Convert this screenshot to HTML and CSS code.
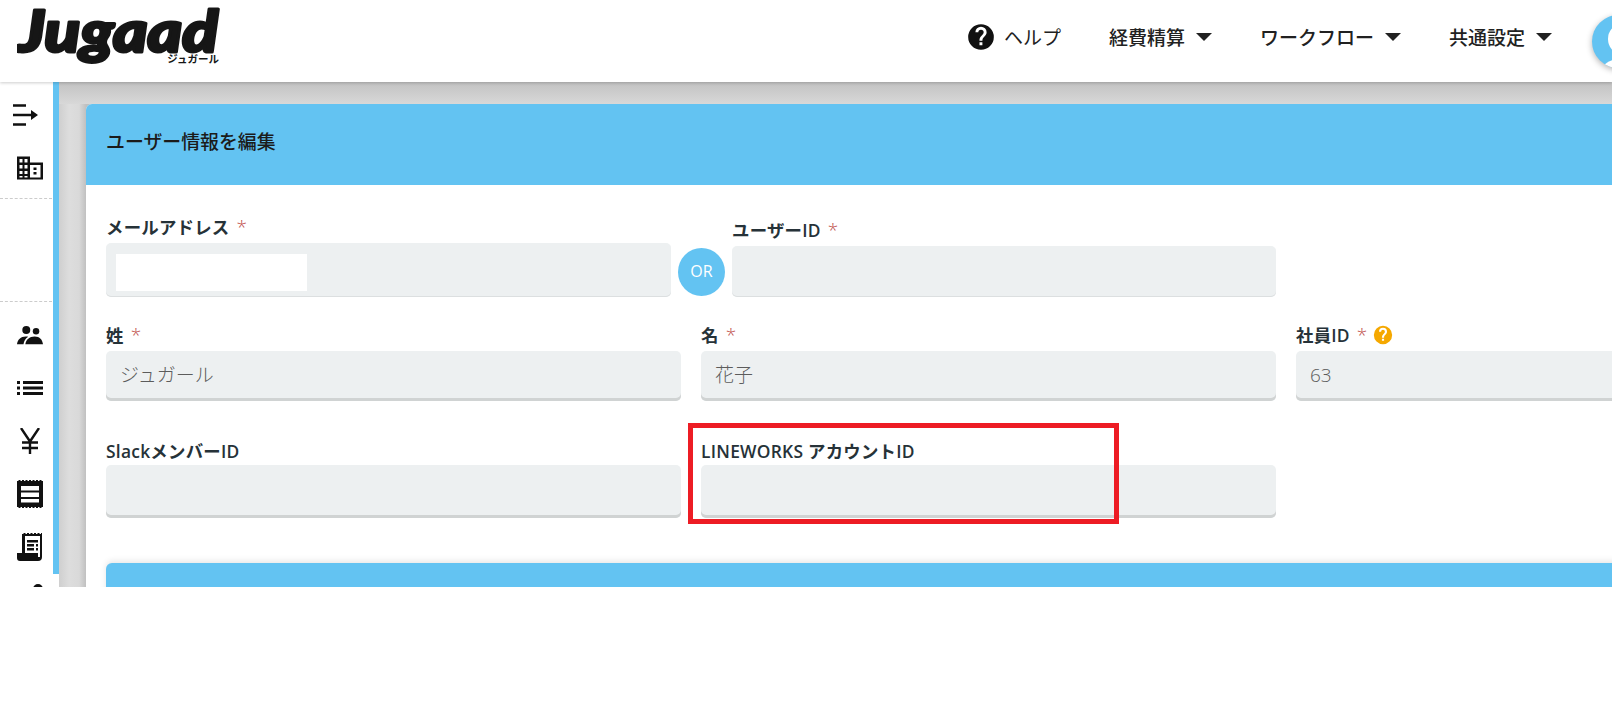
FILE: index.html
```html
<!DOCTYPE html>
<html lang="ja">
<head>
<meta charset="utf-8">
<title>ユーザー情報を編集</title>
<link rel="stylesheet" href="styles.css">
</head>
<body>
<div class="app">
  <header class="topbar">
    <svg class="logo" viewBox="0 0 206 82"><text class="logo-word" x="1" y="52" textLength="200" lengthAdjust="spacingAndGlyphs">Jugaad</text><text class="logo-sub" x="202" y="63" text-anchor="end">ジュガール</text></svg>
    <nav class="nav">
      <a class="nav-item help">
        <svg class="help-icon" viewBox="0 0 24 24"><path fill="#111" d="M12 1a11 11 0 1 0 0 22 11 11 0 0 0 0-22zm1.200 18h-2.500v-2.500h2.500V19zm2.500-8.200l-1.100 1.200c-.9.9-1.400 1.600-1.400 3.200h-2.500v-.6c0-1.300.5-2.400 1.400-3.300l1.500-1.600c.5-.4.700-1 .7-1.700a2.300 2.300 0 0 0-4.600 0H7.200a4.800 4.800 0 0 1 9.600 0c0 1.100-.4 2-1.100 2.800z"/></svg>
        ヘルプ
      </a>
      <a class="nav-item strong">経費精算<i class="caret"></i></a>
      <a class="nav-item strong">ワークフロー<i class="caret"></i></a>
      <a class="nav-item strong">共通設定<i class="caret"></i></a>
    </nav>
    <div class="avatar"></div>
  </header>
  <div class="body">
    <aside class="sidebar">
      <div class="side-group upper">
        <svg class="ico ico-arrow" viewBox="0 0 26 24"><path fill="#111" d="M0 1.300h13v2.400H0zM0 10.800h18V7l7 5-7 5v-3.800H0zM0 20.300h13v2.400H0z"/></svg>
        <svg class="ico ico-right" viewBox="0 0 26 24"><path fill="#111" fill-rule="evenodd" d="M0 .5h13v6h13v17H0zM2.500 3v3.500h3V3zm5 0v3.500h3V3zM2.500 9v3.500h3V9zm5 0v3.500h3V9zM2.500 15v3h3v-3zm5 0v3h3v-3zM2.500 20v1.500h3V20zm5 0v1.500h3V20zM13 9v12.500h10.500V9zm3.500 2.500h3V14h-3zm0 4.500h3v2.500h-3z"/></svg>
      </div>
      <div class="side-spacer"></div>
      <div class="side-group lower">
        <svg class="ico" viewBox="0 0 28 22"><g fill="#111"><circle cx="10" cy="5.500" r="4.300"/><circle cx="20.500" cy="7" r="3.500"/><path d="M0 21c.5-5 4-8.500 9.500-8.500 1 0 1.800.1 2.500.3C9 14.500 7.500 17.500 7 21zM9 21c.5-5 4.500-8.500 10-8.500s8.500 3.500 9 8.500z"/></g></svg>
        <svg class="ico" viewBox="0 0 26 15"><g fill="#111"><path d="M0 .5h3v3H0zM0 6h3v3H0zM0 11.500h3v3H0zM6 .5h20v3H6zM6 6h20v3H6zM6 11.500h20v3H6z"/></g></svg>
        <svg class="ico" viewBox="0 0 22 26"><path fill="none" stroke="#111" stroke-width="2.400" d="M2 0l9 13.500L20 0M11 13.500V26M3 14.500h16M3 20h16"/></svg>
        <svg class="ico tall-ico" viewBox="0 0 26 28"><path fill="#111" fill-rule="evenodd" d="M0 0h26v28H0zM4 6v4.500h18V6zm0 6.500V17h18v-4.500zM4 19v3.500h18V19z"/><path fill="none" stroke="#fff" stroke-width="1.200" stroke-dasharray="1.500 2" d="M0 .5h26M0 27.500h26"/></svg>
        <svg class="ico tall-ico" viewBox="0 0 26 28"><path fill="#111" fill-rule="evenodd" d="M5 0h20v24a4 4 0 0 1-4 4H3a3 3 0 0 1-3-3v-5h5zM8 3v17h13v4h2V3zM10 7h11v2.500H10zm0 4h7v2.500h-7zm9 0h2v2.500h-2zm-9 4h7v2.500h-7zm9 0h2v2.500h-2z"/><path fill="none" stroke="#fff" stroke-width="1.200" stroke-dasharray="1.500 2" d="M5 .5h20"/></svg>
        <svg class="ico ico-partial" viewBox="0 0 26 26"><circle cx="21" cy="6" r="5" fill="#111"/></svg>
      </div>
    </aside>
    <main class="content">
      <section class="card">
        <h1 class="card-title">ユーザー情報を編集</h1>
        <div class="card-body">
          <div class="row id-row">
            <div class="field email-field">
              <label class="label">メールアドレス <em>*</em></label>
              <div class="input thin"><span class="mask"></span></div>
            </div>
            <div class="or">OR</div>
            <div class="field userid-field">
              <label class="label">ユーザーID <em>*</em></label>
              <div class="input thin"></div>
            </div>
          </div>
          <div class="row grid name-row">
            <div class="field"><label class="label">姓 <em>*</em></label><div class="input">ジュガール</div></div>
            <div class="field"><label class="label">名 <em>*</em></label><div class="input">花子</div></div>
            <div class="field"><label class="label">社員ID <em>*</em> <svg class="tip" viewBox="0 0 24 24"><path fill="#f5a800" d="M12 1a11 11 0 1 0 0 22 11 11 0 0 0 0-22zm1.300 18h-2.600v-2.500h2.600V19zm2.400-8.200l-1.100 1.200c-.9.900-1.300 1.600-1.300 3.200h-2.600v-.6c0-1.300.5-2.400 1.400-3.300l1.500-1.600c.5-.4.700-1 .7-1.700a2.300 2.300 0 0 0-4.600 0H7.200a4.800 4.800 0 0 1 9.600 0c0 1.100-.4 2-1.100 2.800z"/></svg></label><div class="input">63</div></div>
          </div>
          <div class="row grid contact-row">
            <div class="field"><label class="label">SlackメンバーID</label><div class="input tall"></div></div>
            <div class="field">
              <label class="label">LINEWORKS アカウントID</label><div class="input tall"></div>
              <div class="highlight"></div>
            </div>
          </div>
        </div>
        <div class="subcard"></div>
      </section>
    </main>
  </div>
</div>
</body>
</html>
```
FILE: styles.css
```css
* { box-sizing: border-box; }
html, body { margin: 0; padding: 0; background: #fff; overflow: hidden; }
body { font-family: "Open Sans", "Noto Sans CJK JP", sans-serif; color: #212121; }
.app { width: 1612px; height: 587px; overflow: hidden; display: flex; flex-direction: column; position: relative; }

.topbar { height: 82px; flex: none; display: flex; align-items: center; background: #fff; position: relative; z-index: 2; box-shadow: 0 1px 3px rgba(0,0,0,.2); padding-left: 17px; }
.logo { width: 206px; height: 82px; flex: none; display: block; }
.logo-word { font-family: "Lato", sans-serif; font-weight: 900; font-style: italic; font-size: 58px; fill: #161616; stroke: #161616; stroke-width: 3px; stroke-linejoin: round; }
.logo-sub { font-family: "Noto Sans CJK JP", sans-serif; font-size: 10.500px; font-weight: 700; fill: #161616; }
.nav { margin-left: auto; display: flex; align-items: center; height: 100%; margin-right: 60px; }
.nav-item { display: flex; align-items: center; font-family: "Noto Sans CJK JP", sans-serif; font-size: 19px; color: #212121; white-space: nowrap; line-height: 24px; padding-bottom: 8px; }
.nav-item.help { margin-right: 48px; font-weight: 400; }
.help-icon { width: 28px; height: 28px; margin-right: 9px; }
.nav-item.strong { font-weight: 500; margin-right: 48px; }
.nav-item.strong:last-child { margin-right: 0; }
.caret { display: inline-block; width: 0; height: 0; margin-left: 11px; border-left: 8px solid transparent; border-right: 8px solid transparent; border-top: 8px solid #212121; }
.avatar { position: absolute; left: 1592px; top: 15px; width: 53px; height: 53px; border-radius: 50%; background: #63c3f2; box-shadow: 0 2px 6px rgba(0,0,0,.3); overflow: hidden; }
.avatar::before { content: ""; position: absolute; left: 16px; top: 10px; width: 24px; height: 28px; border-radius: 50%; background: #fff; }
.avatar::after { content: ""; position: absolute; left: 8px; top: 43px; width: 50px; height: 30px; border-radius: 50%; background: #fff; }

.body { flex: 1; display: flex; min-height: 0; }
.sidebar { width: 59px; flex: none; background: #fff; display: flex; flex-direction: column; position: relative; z-index: 1; }
.sidebar::after { content: ""; position: absolute; right: 0; top: 0; width: 6px; height: 492px; background: #63c3f2; }
.side-group { display: flex; flex-direction: column; flex: none; width: 52px; }
.upper { gap: 27px; padding-top: 20px; padding-bottom: 18px; border-bottom: 1px dashed #ccc; height: 117px; }
.side-spacer { height: 103px; width: 52px; flex: none; border-bottom: 1px dashed #ccc; }
.lower { gap: 27px; padding-top: 20px; padding-left: 17px; }
.ico { width: 26px; height: 26px; display: block; flex: none; }
.ico-arrow { margin-left: 13px; }
.ico-right { margin-left: 17px; }
.tall-ico { height: 28px; margin-bottom: -1px; margin-top: -1px; }
.ico-partial { margin-top: -4px; }

.content { flex: 1; min-width: 0; padding: 22px 0 0 27px; background: linear-gradient(90deg, #cfcfcf 0, #dddddd 10px, #d9d9d9 20px, #c0c0c0 27px); position: relative; overflow: hidden; }
.content::before { content: ""; position: absolute; left: 0; top: 0; right: 0; height: 22px; background: linear-gradient(180deg, #c2c2c2, #d8d8d8); }
.card { position: relative; width: 1600px; height: 500px; background: #fff; border-radius: 6px 0 0 0; }
.card-title { margin: 0; height: 81px; background: #63c3f2; border-radius: 6px 0 0 0; padding: 0 0 0 20px; font-family: "Noto Sans CJK JP", sans-serif; font-size: 18.9px; font-weight: 500; line-height: 74px; color: #1b1b1b; }
.card-body { padding: 24px 0 0 20px; }
.row { display: flex; }
.id-row { height: 88px; align-items: flex-end; }
.grid { display: grid; grid-template-columns: repeat(3, 575px); column-gap: 20px; }
.name-row { margin-top: 26px; }
.contact-row { margin-top: 36px; }
.contact-row .label { padding-bottom: 0; }
.field { position: relative; }
.label { display: flex; align-items: center; gap: 7px; height: 28px; padding-bottom: 4px; font-size: 17.4px; letter-spacing: .25px; font-weight: 600; line-height: 24px; color: #263238; white-space: nowrap; }
.label em { color: #c0504d; font-style: normal; font-weight: 300; font-size: 19px; }
.input { height: 50px; background: #edf0f1; border-radius: 5px; box-shadow: inset 0 -3px 0 #d0d3d3; font-family: "Open Sans", "Noto Sans CJK JP", sans-serif; font-size: 19px; line-height: 48px; padding-left: 14px; color: #5c5c5c; font-weight: 300; }
.input.tall { height: 53px; }
.input.thin { height: 54px; box-shadow: inset 0 -1px 0 #dcdfe0; position: relative; }
.email-field { width: 565px; }
.userid-field { width: 544px; }
.userid-field .input.thin { height: 51px; }
.or { width: 47px; height: 48px; border-radius: 50%; background: #63c3f2; color: #fff; font-size: 16px; line-height: 46px; text-align: center; margin: 0 7px 1px 7px; }
.mask { position: absolute; left: 10px; top: 11px; width: 191px; height: 37px; background: #fff; }
.tip { width: 20px; height: 20px; margin-left: -2px; }
.highlight { position: absolute; left: -13px; top: -14px; width: 431px; height: 101px; border: 5px solid #ed1c24; pointer-events: none; }
.subcard { position: absolute; left: 20px; top: 459px; width: 1580px; height: 40px; background: #63c3f2; border-radius: 6px 0 0 0; box-shadow: 0 -2px 6px rgba(0,0,0,.1); }
```
